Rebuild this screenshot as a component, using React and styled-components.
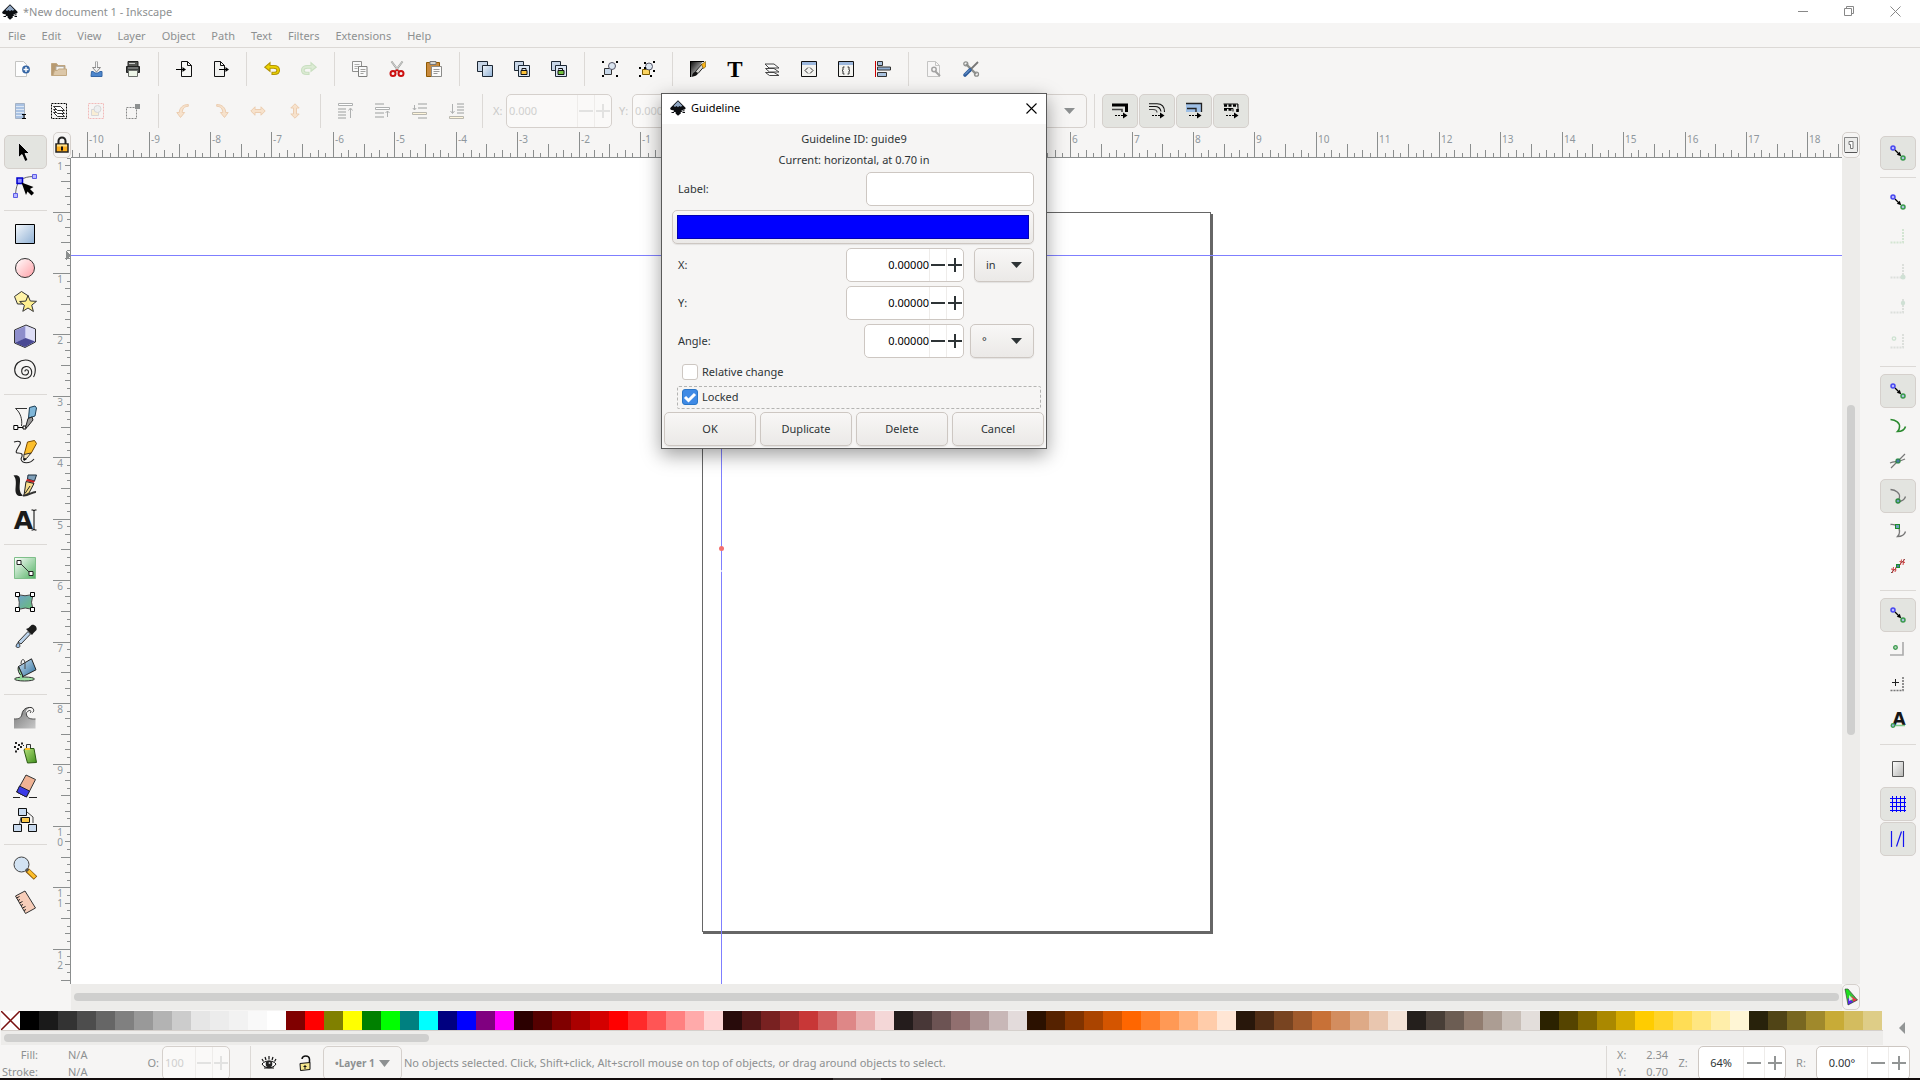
import React, { useLayoutEffect, useRef, useState } from 'react'
import styled, { createGlobalStyle, css } from 'styled-components'

const GlobalStyle = createGlobalStyle`
  * {
    box-sizing: border-box;
  }

  body {
    margin: 0;
    overflow: hidden;
    background: #f6f5f4;
    color: #8d9091;
    font-family: 'Noto Sans', 'Open Sans', sans-serif;
    font-size: 11px;
    line-height: 16px;
  }

  button,
  input,
  select {
    font: inherit;
    color: inherit;
    margin: 0;
    padding: 0;
  }

  svg {
    display: block;
    flex: none;
    overflow: visible;
  }
`

/* ---------- icons, 16px grid ---------- */

const smallIcons = {
  docNew: (
    <>
      <path d="M1.5.5h8l3 3v12h-11z" fill="#fdfdfd" stroke="#c4c4c2" />
      <circle cx="12" cy="8.5" r="3.9" fill="#3465a4" />
      <path d="M12 6v5M9.500 8.500h5" stroke="#fff" strokeWidth="1.400" />
    </>
  ),
  open: (
    <>
      <path d="M.5 14.500v-12h5l1.500 2h7v10z" fill="#b79a72" stroke="#c0a680" />
      <path d="M5 5.500h8v6H5z" fill="#f4f4f2" stroke="#b5ada2" />
      <path d="M2 14.500 3.500 9.500h3l1-1.500h8v6.500z" fill="#dcc7a8" stroke="#c3a981" />
    </>
  ),
  save: (
    <>
      <path d="M8.500.5v8" stroke="#a3a3a3" strokeWidth="3" />
      <path d="M4.500 6.500h8l-4 4.500z" fill="#f0f0f0" stroke="#8d8d8d" />
      <path d="M8.500 1v7" stroke="#f4f4f4" />
      <path d="M3.500 10.500h1.500l2 1.500h3l2-1.500h2v5h-11z" fill="#4d86cc" stroke="#3566a5" />
    </>
  ),
  print: (
    <>
      <path d="M3 .5h10v5H3z" fill="#555753" stroke="#222" />
      <path d="M4 2.500h6" stroke="#ccc" />
      <path d="M1.500 5.500h13v6h-13z" fill="#3d403f" stroke="#222" />
      <path d="M3 7h10" stroke="#aaa" />
      <path d="M3.500 9.500h9v6h-9z" fill="#eef6e8" stroke="#6b6e6a" />
    </>
  ),
  importDoc: (
    <>
      <path d="M5.500.5h6l4 4v11h-10z" fill="#f7f7f5" stroke="#111" />
      <path d="M11.500.5v4h4" fill="none" stroke="#111" />
      <path d="M0 8.500h8" stroke="#000" />
      <path d="M6.500 6 10 8.500l-3.500 2.500z" />
    </>
  ),
  exportDoc: (
    <>
      <path d="M1.500.5h6l4 4v11h-10z" fill="#f1f1ef" stroke="#111" />
      <path d="M7.500.5v4h4" fill="none" stroke="#111" />
      <path d="M6 8.500h8" stroke="#000" />
      <path d="M12.500 6 16 8.500l-3.500 2.500z" />
    </>
  ),
  undo: (
    <path
      d="M.8 6.200 6 1.800v2.700h3.500c3.500 0 6 1.700 6 4.700 0 2.700-2 4.300-5.500 4.300H8v-2.200h2c1.900 0 2.900-.8 2.900-2.100 0-1.300-1.300-1.900-3.300-1.900H6v3z"
      fill="#edd400"
      stroke="#b29406"
      strokeWidth="1.100"
    />
  ),
  redo: (
    <path
      d="M15.200 6.200 10 1.800v2.700H6.500c-3.500 0-6 1.700-6 4.700 0 2.700 2 4.300 5.500 4.300h2v-2.200H6c-1.900 0-2.900-.8-2.900-2.100 0-1.300 1.300-1.900 3.300-1.900H10v3z"
      fill="#dcebd4"
      stroke="#c9dfc0"
      strokeWidth="1.100"
    />
  ),
  copy: (
    <>
      <path d="M.5.5h9v10h-9z" fill="#fafafa" stroke="#8f8f8d" />
      <path d="M2.500 3.500h5M2.500 5.500h5M2.500 7.500h3" stroke="#b0b0ae" />
      <path d="M6.500 5.500h8.500v10H6.500z" fill="#fafafa" stroke="#7f7f7d" />
      <path d="M8.500 8.500h5M8.500 10.500h5M8.500 12.500h3" stroke="#a0a09e" />
    </>
  ),
  cut: (
    <>
      <path d="M2.500.5 10 10.500M13.500.5 6 10.500" stroke="#9a9c98" strokeWidth="2" />
      <path d="M2.800 1 10 10M13.200 1 6 10" stroke="#eee" strokeWidth=".7" />
      <circle cx="4" cy="12.500" r="2.500" fill="none" stroke="#cc1010" strokeWidth="2" />
      <circle cx="12" cy="12.500" r="2.500" fill="none" stroke="#cc1010" strokeWidth="2" />
      <path d="M6 10.500l2-1.500 2 1.500" fill="none" stroke="#cc1010" strokeWidth="1.500" />
    </>
  ),
  paste: (
    <>
      <path d="M.5 1.500h13v14H.5z" fill="#c98a3c" stroke="#8f5902" />
      <path d="M4 .5h6v3H4z" fill="#d5d5d2" stroke="#777" />
      <path d="M5.500 5.500h10v10h-10z" fill="#fbfbfb" stroke="#8b8b89" />
      <path d="M7.500 8.500h6M7.500 10.500h6M7.500 12.500h4" stroke="#999" />
    </>
  ),
  duplicate: (
    <>
      <path d="M.5.5h10v10H.5z" fill="#c7d5e6" stroke="#1c2733" />
      <path d="M5.500 4.500h10v11h-10z" fill="url(#blueFade)" stroke="#1c2733" />
    </>
  ),
  clone: (
    <>
      <path d="M.5.5h9v9h-9z" fill="#c7d5e6" stroke="#1c2733" />
      <path d="M4.500 4.500h11v11h-11z" fill="#dbe6f3" stroke="#1c2733" />
      <path d="M8 10V7.500h4V10" fill="none" stroke="#111" />
      <path d="M7 9.500h6v4H7z" fill="#fcc33a" stroke="#111" />
    </>
  ),
  unlink: (
    <>
      <path d="M.5.5h9v9h-9z" fill="#c7d5e6" stroke="#1c2733" />
      <path d="M4.500 4.500h11v11h-11z" fill="#dbe6f3" stroke="#1c2733" />
      <path d="M7.500 8.500V7.500h4V10" fill="none" stroke="#111" />
      <path d="M7 9.500h6v4H7z" fill="#73c140" stroke="#111" />
    </>
  ),
  group: (
    <>
      <path d="M2.500 7.500h7v6h-7z" fill="#c8d8ea" stroke="#333" />
      <circle cx="10" cy="5" r="3.500" fill="#dbe5f0" stroke="#556" />
      <path d="M0 0h2v2H0zM14 0h2v2h-2zM0 14h2v2H0zM14 14h2v2h-2z" />
    </>
  ),
  ungroup: (
    <>
      <path d="M3.500 8.500h7v5h-7z" fill="#fcd561" stroke="#7a5a00" />
      <circle cx="10" cy="5.500" r="3.500" fill="#dbe5f0" stroke="#556" />
      <path d="M5 1h2v2H5zM0 6h2v2H0zM14 0h2v2h-2zM0 14h2v2H0zM11 14h2v2h-2zM14 9h2v2h-2zM5 6h2v2H5z" />
    </>
  ),
  fillStroke: (
    <>
      <path d="M0 0h13L3 16H0z" fill="url(#inkFade)" />
      <path d="M.5 16V.5H14" fill="none" stroke="#000" />
      <path d="M2 15.500c0-3 2-4.500 4-5l2 2c-1 2-3 3-6 3z" fill="#111" />
      <path d="M5.500 10.500 12 3l2.500 2-6.500 7.500z" fill="#d5d5d2" stroke="#222" />
      <path d="M11.500 3.500 15.500.5V6l-2 1.500z" fill="#fcb315" stroke="#6b5200" strokeWidth=".6" />
    </>
  ),
  textT: (
    <text x="8" y="15.500" textAnchor="middle" fontFamily="'Liberation Serif', serif" fontWeight="700" fontSize="23" fill="#000">
      T
    </text>
  ),
  layers: (
    <g fill="#fafafa" stroke="#444">
      <path d="M1.500 11.500h8.500l5 3H5.500z" />
      <path d="M1.500 7.500h8.500l5 3.500H5.500z" />
      <path d="M1 3h9l5 4H5z" />
    </g>
  ),
  xml: (
    <>
      <path d="M.5.5h15v15H.5z" fill="#f3f3f0" stroke="#111" />
      <path d="M1 1h14v3H1z" fill="#9db8dd" />
      <path d="M7 6.500 4 9.500l3 3M9 6.500l3 3-3 3" fill="none" stroke="#333" />
    </>
  ),
  selectors: (
    <>
      <path d="M.5.5h15v15H.5z" fill="#f3f3f0" stroke="#111" />
      <path d="M1 1h14v3H1z" fill="#9db8dd" />
      <path d="M6.500 6h-1.500v3l-1 .5 1 .5v3h1.500M9.500 6H11v3l1 .5-1 .5v3H9.500" fill="none" stroke="#333" />
    </>
  ),
  align: (
    <>
      <path d="M.5 0v16" stroke="#c00" />
      <path d="M2.500.5h5v4h-5zM2.500 11.500h9v4h-9z" fill="#a9c2e0" stroke="#333" />
      <path d="M2.500 6h13v3h-13z" fill="#8fadd2" stroke="#333" />
    </>
  ),
  docProps: (
    <g opacity=".65">
      <path d="M1.500.5h8l4 4v11h-12z" fill="#f8f8f8" stroke="#aaa" />
      <path d="M9.500.5v4h4" fill="none" stroke="#aaa" />
      <circle cx="8" cy="8.500" r="2.200" fill="none" stroke="#777" strokeWidth="1.500" />
      <path d="M9 10l5 5" stroke="#777" strokeWidth="2" />
    </g>
  ),
  prefs: (
    <>
      <path d="M3 3l10 10" stroke="#8d8f8c" strokeWidth="2.400" />
      <circle cx="2.800" cy="2.800" r="2" fill="none" stroke="#8d8f8c" strokeWidth="1.300" />
      <circle cx="13.500" cy="13.200" r="2" fill="none" stroke="#8d8f8c" strokeWidth="1.300" />
      <path d="M8 8 15 1" stroke="#777" strokeWidth="1.800" />
      <path d="M2 14 7 9" stroke="#2d5c9c" strokeWidth="3.600" strokeLinecap="round" />
      <path d="M2 13.500 7 8.500" stroke="#83abdd" strokeWidth="1" />
    </>
  ),
  selectAll: (
    <>
      <path d="M1.500.5h9v15h-9z" fill="#a9c2e3" stroke="#a5b2c4" />
      <path d="M2 3.500h8M2 6.500h8M2 9.500h8M2 12.500h6" stroke="#dde7f4" />
      <path d="M8 11.500h4M8 15.500h4M10 12v3" stroke="#000" />
    </>
  ),
  selectLayers: (
    <>
      <path d="M.5.5h15v15H.5z" fill="none" stroke="#000" strokeDasharray="2 1" />
      <g fill="#fff" stroke="#333">
        <path d="M2.500 9.500h7l4 4h-7z" />
        <path d="M2.500 6.500h7l4 4h-7z" />
        <path d="M2.500 3.500h7l4 4h-7z" />
      </g>
    </>
  ),
  deselect: (
    <g opacity=".5">
      <path d="M.5.5h15v15H.5z" fill="none" stroke="#f08080" strokeDasharray="2 1" />
      <path d="M3.500 6.500h7v6h-7z" fill="#fce8b8" stroke="#bbb" />
      <circle cx="9.500" cy="6" r="3.500" fill="#e6eaee" stroke="#bbb" />
    </g>
  ),
  selectTouch: (
    <>
      <path d="M1.500 4.500h10v11h-10z" fill="none" stroke="#888" strokeDasharray="2 1" />
      <path d="M10 1h5v5h-5z" fill="#8d9090" />
    </>
  ),
  rotateLeft: (
    <path d="M4.500 14.500.8 9.500h2.500c0-4 3-8 9-8v1.800c-4 0-6 2.500-6 6.200h2.300z" fill="#f7e2cc" stroke="#eccdb0" />
  ),
  rotateRight: (
    <path d="M11.500 14.500l3.700-5h-2.500c0-4-3-8-9-8v1.800c4 0 6 2.500 6 6.200H7.400z" fill="#f7e2cc" stroke="#eccdb0" />
  ),
  flipH: <path d="M.8 8 5 3.800v2.700h6V3.800L15.200 8 11 12.200V9.500H5v2.700z" fill="#f7e2cc" stroke="#eccdb0" />,
  flipV: <path d="M8 .8 12.200 5H9.500v6h2.700L8 15.200 3.800 11h2.700V5H3.800z" fill="#f7e2cc" stroke="#eccdb0" />,
  raiseTop: (
    <>
      <path d="M.5.5h14v2H.5z" fill="#fff" stroke="#aeb0b0" />
      <path d="M0 6h8M0 9h8M0 12h8M0 15h8" stroke="#c9cac9" strokeWidth="2" />
      <path d="M12.500 6v9M10.500 7.500l2-2.500 2 2.500" fill="none" stroke="#aeb0b0" />
    </>
  ),
  raise: (
    <>
      <path d="M0 1h9M0 10h9M0 14h9" stroke="#c9cac9" strokeWidth="2" />
      <path d="M.5 4.500h14v2H.5z" fill="#fff" stroke="#aeb0b0" />
      <path d="M12.500 8v6M10.500 10l2-2 2 2" fill="none" stroke="#aeb0b0" />
    </>
  ),
  lower: (
    <>
      <path d="M6 1h9M6 5h9M6 15h9" stroke="#c9cac9" strokeWidth="2" />
      <path d="M.5 9.500h14v2H.5z" fill="#fff6dc" stroke="#b9b7ae" />
      <path d="M2.500 2v5M.8 5l1.700 2 1.700-2" fill="none" stroke="#aeb0b0" />
    </>
  ),
  lowerBottom: (
    <>
      <path d="M8 1h7M8 4h7M8 7h7M8 10h7" stroke="#c9cac9" strokeWidth="2" />
      <path d="M.5 13.500h14v2H.5z" fill="#fff6dc" stroke="#b9b7ae" />
      <path d="M3.500 1v9M1.500 8l2 2.500 2-2.500" fill="none" stroke="#aeb0b0" />
    </>
  ),
  scaleStroke: (
    <>
      <path d="M0 2h14.500V9" fill="none" stroke="#000" strokeWidth="3" />
      <path d="M0 6.500h10V9" fill="none" stroke="#444" strokeWidth="1.600" />
      <path d="M3 12.500h8" stroke="#000" strokeDasharray="2 1" />
      <path d="M11 9.500l4.500 3-4.500 3z" />
    </>
  ),
  scaleCorners: (
    <>
      <path d="M0 .8h8q7.500 0 7.500 8.200M0 3.500h6q5 0 6 5" fill="none" stroke="#111" strokeWidth="1.100" />
      <path d="M0 6.500h4q4 0 4 3" fill="none" stroke="#444" strokeWidth="1.100" />
      <path d="M3 12.500h8" stroke="#000" strokeDasharray="2 1" />
      <path d="M11 9.500l4.500 3-4.500 3z" />
    </>
  ),
  scaleGradient: (
    <>
      <path d="M0 1h15v8H0z" fill="#9fc0e6" />
      <path d="M0 .5h15.500V9M1 5.500h9V9" fill="none" stroke="#222" strokeWidth="1.300" />
      <path d="M3 12.500h8" stroke="#000" strokeDasharray="2 1" />
      <path d="M11 9.500l4.500 3-4.500 3z" />
    </>
  ),
  scalePattern: (
    <>
      <path d="M.5 1h14.500v7M1 5.500h9v3" fill="none" stroke="#111" />
      <path d="M1 2.500h14M1 6.500h9M14.500 6v3" stroke="#000" strokeWidth="2.600" strokeDasharray="3 1.500" />
      <path d="M3 12.500h8" stroke="#000" strokeDasharray="2 1" />
      <path d="M11 9.500l4.500 3-4.500 3z" />
    </>
  ),
  snap: (
    <>
      <circle cx="3" cy="3" r="2" fill="#b9b9ff" stroke="#4646f0" strokeWidth="1.500" />
      <circle cx="13" cy="13" r="2" fill="#a9bfe0" stroke="#3a9a4c" strokeWidth="1.500" />
      <path d="M5 5l4.500 4.500" stroke="#000" strokeWidth="1.200" />
      <path d="M11.200 11.200 6.800 9.800l3-3z" />
    </>
  ),
  snapBox: <path d="M13 0v13.500H0" fill="none" stroke="#d3e5d2" strokeWidth="2" strokeDasharray="2 1" />,
  snapCorner: (
    <>
      <path d="M13 0v13.500H0" fill="none" stroke="#dcdfdb" strokeWidth="2" strokeDasharray="2 1" />
      <circle cx="13" cy="13" r="2.500" fill="#cfe0d4" />
    </>
  ),
  snapMid: (
    <>
      <path d="M13 0v13.500H0" fill="none" stroke="#dcdfdb" strokeWidth="2" strokeDasharray="2 1" />
      <circle cx="13" cy="4" r="2.200" fill="#cfe0d4" />
    </>
  ),
  snapCenter: (
    <>
      <path d="M13 0v13.500H0" fill="none" stroke="#dcdfdb" strokeWidth="2" strokeDasharray="2 1" />
      <circle cx="4" cy="4.500" r="1.700" fill="none" stroke="#cde2d1" strokeWidth="1.300" />
    </>
  ),
  snapPath: (
    <path d="M.5 1.500C6 2 10 5 9.500 9c0 2-1 3.500-2 4.500 4 0 7-1.500 8-5" fill="none" stroke="#2b8a2f" strokeWidth="1.600" />
  ),
  snapCross: (
    <>
      <path d="M1 15 15 1M0 10c5-2 8-.5 15-4" fill="none" stroke="#777" strokeWidth="1.200" />
      <rect x="6" y="6" width="4" height="4" rx="1" fill="#4a78a8" stroke="#1d8a2b" />
    </>
  ),
  snapCusp: (
    <>
      <path d="M.5 1.500C6 2 10 5 9.500 9c0 2-1 3.500-2 4.500 4 0 7-1.500 8-5" fill="none" stroke="#777" strokeWidth="1.300" />
      <circle cx="8" cy="13" r="2" fill="#6f9fc0" stroke="#2b8a3b" strokeWidth="1.300" />
    </>
  ),
  snapSmooth: (
    <>
      <path d="M.5 1.500C6 1 10 4 9.500 9c0 2-1 3.500-2 4.500 4 0 7-1.500 8-5" fill="none" stroke="#777" strokeWidth="1.300" />
      <rect x="5.500" y="1.500" width="4" height="4" fill="#6f9fc0" stroke="#1d8a2b" />
    </>
  ),
  snapLine: (
    <>
      <path d="M1 15 15 1" stroke="#555" />
      <path d="M3.500 9 2.500 15M6 9l-1 5M1 11l5.500 1M11.500 1.500l-1 5.500M14 1l-1 6M9.500 3.500l5.500 1" stroke="#c44" />
      <rect x="6.500" y="6.500" width="3" height="3" fill="#4a78a8" stroke="#1d8a2b" />
    </>
  ),
  snapObject: (
    <>
      <path d="M13 0v13H0" fill="none" stroke="#aaa" strokeWidth="1.600" />
      <circle cx="5.500" cy="5.500" r="1.800" fill="#b9d6c0" stroke="#3a9a4c" strokeWidth="1.300" />
    </>
  ),
  snapRotation: (
    <>
      <path d="M13 0v13.500H0" fill="none" stroke="#777" strokeWidth="1.600" strokeDasharray="2 1" />
      <path d="M5.500 2v7M2 5.500h7" stroke="#222" />
    </>
  ),
  snapText: (
    <>
      <text x="9" y="13" textAnchor="middle" fontFamily="'DejaVu Sans', sans-serif" fontWeight="700" fontSize="17" fill="#161616">
        A
      </text>
      <path d="M3 13.500h12" stroke="#7fc98a" strokeWidth="1.500" />
      <circle cx="3" cy="13.500" r="1.800" fill="#8fb0d8" stroke="#3a9a4c" strokeWidth="1.300" />
    </>
  ),
  pageBorder: <path d="M2.500.5h11v15h-11z" fill="url(#greyFade)" stroke="#555" />,
  grid: <path d="M2.500 0v16M6.500 0v16M10.500 0v16M14.500 0v16M0 2.500h16M0 6.500h16M0 10.500h16M0 14.500h16" stroke="#00f" />,
  guides: <path d="M1.500 0v16M13.500 0v16M6.500 15.500 11.500.5" stroke="#1414f0" strokeWidth="1.200" />,
  eye: (
    <>
      <path d="M1 9c3-4 11-4 14 0-3 5-11 5-14 0z" fill="#fff" stroke="#111" />
      <circle cx="8" cy="9" r="3.300" fill="#222" />
      <circle cx="8.500" cy="8" r="1" fill="#ccc" />
      <path d="M2.500 6.500 1 4M5 5 4 2M8 4.500V1M11 5l1-3M13.500 6.500 15 4M3 13h10" stroke="#111" strokeWidth="1.200" />
    </>
  ),
  unlocked: (
    <>
      <path d="M5 4c.5-4 7-4 7.500 0v4" fill="none" stroke="#111" strokeWidth="1.500" />
      <path d="M3 8.500l10-1v7l-9.500 1z" fill="#f5e78e" stroke="#111" />
      <path d="M8 10v4M6.500 11.500h3" stroke="#111" />
    </>
  ),
}

/* ---------- toolbox icons, 24px grid ---------- */

const toolIcons = {
  selector: <path d="M5.500 2.500v15l3.500-3 3 7 3-1.300-3-6.700h4.500z" fill="#000" stroke="#fff" strokeWidth=".8" />,
  node: (
    <>
      <path d="M2.500 21C3 12 5 8 8 6q4-3.500 13-3.500" fill="none" stroke="#666" />
      <path d="M.5 19.500h4v4h-4zM19.500.5h4v4h-4z" fill="#b9b9ff" stroke="#5b5be6" />
      <path d="M4 4h5.500v5.500H4z" fill="#8f8fff" stroke="#00c" strokeWidth="1.500" />
      <path d="M8.500 8.500l12 4.500-3.500 2 4 4-2.500 2.500-4-4-1.500 3.500z" fill="#000" />
    </>
  ),
  rect: <path d="M2.500 2.500h19v19h-19z" fill="url(#blueFade)" stroke="#000" />,
  ellipse: <circle cx="12" cy="12" r="9.500" fill="url(#pinkFade)" stroke="#333" />,
  star: (
    <>
      <path d="M8.500 1.500l7 4.500-2.500 8H4.500L1.500 6.500z" fill="#fff3a8" stroke="#333" />
      <path d="M15 5.500l2.300 5.500 6.200.3-4.800 3.900 1.700 6.300-5.400-3.500-5.200 3.300 1.600-6L6.600 11.500l6.200-.4z" fill="#fff08f" stroke="#333" />
    </>
  ),
  box3d: (
    <>
      <path d="M13 1 22.500 5v13L12 23.500 1.500 19V6z" fill="#c5c5ee" stroke="#333" />
      <path d="M2 6.500 12 2.500v12l-10 4z" fill="#8e8ecb" />
      <path d="M13 2l9 3.500V17l-9-3z" fill="#dedef6" />
      <path d="M2 18.700 12.500 14l9.500 3.500-10 5.500z" fill="#4a4a94" />
    </>
  ),
  spiral: (
    <path
      d="M12 13.500c-.3-2.500 3.500-2.500 3.500.5 0 4-6.500 4.200-6.800-.5C8.400 8 16 6.500 18.300 12c1.700 5.500-2.500 8.500-6.300 8.500-6 0-10.300-3.500-10.300-8.500 0-6 4.800-10 10.800-10 7 0 11 6 9.500 13-.3 1.600-.8 2.800-1.500 4"
      fill="none"
      stroke="#222"
      strokeWidth="1.100"
    />
  ),
  pen: (
    <>
      <path d="M14 2.500H2.500c5 4 7 11 6 17.500" fill="none" stroke="#333" />
      <path d="M.8 19.500h4v4h-4z" fill="#fff" stroke="#000" />
      <path d="M5 21.500h5" stroke="#000" />
      <path d="M10 20h3v3h-3z" fill="#fff" stroke="#000" />
      <path d="M16.500 1.500 22 0l1.500 2-1.500 8-6.500 2z" fill="#7fb6d8" stroke="#1b3d55" />
      <path d="M15 12.500l4-1.500 1 3-6 7.500h-1.500z" fill="#999" stroke="#222" />
    </>
  ),
  pencil: (
    <>
      <path d="M1 2c6-2 8 0 5 4-3 5-4 7-1 7 5 0 5 2 3 6 1 5 9 5 13 0" fill="none" stroke="#222" strokeWidth="1.100" />
      <path d="M14.500 2l7-1.500 2 3-5.500 10-7 1.500z" fill="#fcbe2b" stroke="#7a4a00" />
      <path d="M11 14.500l7-1.500-4 5-3.500 2z" fill="#f8e7c0" stroke="#333" />
      <path d="M11 18v3l3-2z" fill="#111" />
    </>
  ),
  calligraphy: (
    <>
      <path d="M.5 1.500c5-1 7 1 6.500 6-.5 6-1 11 3 14-5 2-8-1-7.500-7 .5-5 1-10-2-13z" fill="#1c1c1c" />
      <path d="M10 21.500c5 1 9-4 13-3.500" fill="none" stroke="#333" strokeWidth="2" />
      <path d="M15 1h8.500l-2 6-7-2z" fill="#7f9fb8" stroke="#1b2d3d" />
      <path d="M14 5l8 2-1.500 2-7.500-2z" fill="#c22" />
      <path d="M13 7.500l8 2-5 9.500-5 2.500z" fill="#f7dd8c" stroke="#222" />
      <path d="M12 19.500 17 12" stroke="#222" />
    </>
  ),
  text: (
    <>
      <text x="10.500" y="21" textAnchor="middle" fontFamily="'DejaVu Sans', sans-serif" fontWeight="700" fontSize="25" fill="#1b1b1b">
        A
      </text>
      <path d="M18.500 2h2l.5 1 .5-1h2M21 3v18M18.500 22h2l.5-1 .5 1h2" fill="none" stroke="#000" />
    </>
  ),
  gradient: (
    <>
      <path d="M1.500 1.500h21v21h-21z" fill="url(#greenFade)" stroke="#7fbf8a" />
      <path d="M7 7l10 10" stroke="#333" />
      <path d="M4 4.500h4v4H4zM16 15.500h4v4h-4z" fill="#fff" stroke="#222" />
    </>
  ),
  mesh: (
    <>
      <path d="M4 4.500q8 2.500 16 0-3 8 0 15-8-3-15 0 3-7-1-15z" fill="url(#meshFade)" stroke="#444" />
      <path d="M2.500 2.500h4v4h-4zM17.500 2.500h4v4h-4zM2.500 17.500h4v4h-4zM17.500 17.500h4v4h-4z" fill="#fff" stroke="#000" />
    </>
  ),
  dropper: (
    <>
      <path d="M5 18 15 7.500l2.500 2.500L8 20z" fill="#bcd3ea" stroke="#333" />
      <path d="M13 5l6 6 1.500-2 3-3c1-3-2-6-5-5l-3 3z" fill="#1c1c1c" />
      <path d="M5 18.500c-3 4-2 5 0 5s3-1.500 0-5z" fill="#9cc3ea" stroke="#333" />
    </>
  ),
  bucket: (
    <>
      <ellipse cx="11.500" cy="21" rx="10" ry="2" fill="#9fe0a4" stroke="#333" />
      <path d="M5.500 8.500 18.500.8l4.500 11-13 6.700z" fill="url(#bucketFade)" stroke="#222" />
      <path d="M5.500 8.500 10 18.500c-3-.5-6-6-4.500-10z" fill="#8fd79a" stroke="#222" />
      <path d="M8 17v4" stroke="#8fd79a" strokeWidth="2" />
      <path d="M8 6c0-6 4-6 4 0v5" fill="none" stroke="#444" />
    </>
  ),
  tweak: (
    <>
      <path d="M1 22.500v-9c5 .5 7.500-1.500 8-5C9.500 4 13 1 18 1.500c-4 1-5.500 3-5 6 .5 4 4 6 9.500 6v9z" fill="url(#waveFade)" />
      <path d="M1 13c5 .5 7.500-1.500 8-5 .5-4 4-7 9-6.500 3 .5 3.500 4 1.500 5" fill="none" stroke="#333" />
      <path d="M17 7c1.500-1 1-3-.8-2.500-2.700 1-3.200 3-2.700 4.500.8 3 4 4.500 9 4" fill="none" stroke="#444" />
    </>
  ),
  spray: (
    <>
      <path d="M2 2h2v2H2zM5 4h2v2H5zM1 6h2v2H1zM4 8h2v2H4zM7 6h2v2H7zM8 2.500h2v2H8zM10 5h1v1h-1zM2 10.500h2v2H2z" fill="#222" />
      <path d="M13.500 4.500h4v4h-4z" fill="#eee" stroke="#333" />
      <path d="M12 8.500h9l2.500 14-9 .5-3.500-13z" fill="url(#sprayFade)" stroke="#2b5a12" />
      <path d="M12 9h5" stroke="#fcbe2b" strokeWidth="2" />
    </>
  ),
  eraser: (
    <>
      <path d="M13 1l9.500 4.500-9 17.500L3.500 18z" fill="#f0b394" stroke="#333" />
      <path d="M6.500 12 16.500 17l-3.200 6-9.500-5z" fill="#3b3be8" stroke="#223" />
      <path d="M0 23.500h7M16 23.500h8" stroke="#222" />
    </>
  ),
  connector: (
    <>
      <path d="M6.500 16 8 9M14 4l6 5v6" fill="none" stroke="#444" />
      <path d="M5.500.5h8v7h-8zM.5 16.500h8v7h-8zM15.500 16.500h8v7h-8z" fill="#c9daee" stroke="#111" />
      <path d="M8.500 9.500h8v5h-8z" fill="#fcc94a" stroke="#111" />
    </>
  ),
  zoom: (
    <>
      <circle cx="8.500" cy="8.500" r="7.500" fill="#d3e3f3" stroke="#444" />
      <path d="M14 14l8.500 8" stroke="#7a4a00" strokeWidth="5" />
      <path d="M15 14.500l7 7" stroke="#fcbe2b" strokeWidth="3.400" />
      <path d="M13 13l2 2" stroke="#555" strokeWidth="3" />
    </>
  ),
  measure: (
    <>
      <path d="M12 1 22.500 18 12.500 23.500 2.500 6z" fill="#f7cdb9" stroke="#333" />
      <path d="M3.500 8l3-1.500M5 10.500l2-1M6.500 13l3-1.500M8 15.500l2-1M9.500 18l3-1.500M11 20.500l2-1" stroke="#222" />
    </>
  ),
}

function Icon({ name, size = 16 }) {
  const set = size === 24 ? toolIcons : smallIcons
  return (
    <svg width={size} height={size} viewBox={`0 0 ${size} ${size}`} fill="#000" aria-hidden="true">
      {set[name]}
    </svg>
  )
}

function AppLogo({ size }) {
  return (
    <svg width={size} height={size} viewBox="0 0 16 16" aria-hidden="true">
      <path d="M8 .3 15.300 7.500c1 1.200-.3 2-2 2.300l-2 .7 1.200 1-2 .8.500 1L8 15.700l-2.500-2.200.5-1-2.500-.8.500-1.200L1.500 10C.2 9.500-.3 8.500.7 7.500z" fill="#0b0d10" />
      <path d="M8 1.300 12.500 6l-2 .8-1.200-.8L8 7.200 6.500 6 5 7 3.500 6z" fill="#8fa6c2" />
      <path d="M1.500 12.500h2.500M12.500 12.500h2.500M12.500 10.800h2" stroke="#0b0d10" />
    </svg>
  )
}

function Gradients() {
  const stops = [
    ['blueFade', '#f4f8fc', '#8fb0d4'],
    ['pinkFade', '#ffffff', '#ff9fa6'],
    ['greenFade', '#ffffff', '#52b263'],
    ['meshFade', '#6f9fd0', '#67bf73'],
    ['bucketFade', '#cfe3f5', '#2d6f9c'],
    ['waveFade', '#777777', '#c9c9c9'],
    ['sprayFade', '#b7e27c', '#3f8f1c'],
    ['greyFade', '#ffffff', '#b5b5b3'],
    ['inkFade', '#000000', '#ffffff'],
  ]
  return (
    <HiddenSvg aria-hidden="true">
      <defs>
        {stops.map(([id, from, to]) => (
          <linearGradient key={id} id={id} x1="0" y1="0" x2="1" y2="1">
            <stop offset="0" stopColor={from} />
            <stop offset="1" stopColor={to} />
          </linearGradient>
        ))}
      </defs>
    </HiddenSvg>
  )
}

/* ---------- data ---------- */

const menus = ['File', 'Edit', 'View', 'Layer', 'Object', 'Path', 'Text', 'Filters', 'Extensions', 'Help']

const commands = [
  ['docNew', 'open', 'save', 'print'],
  ['importDoc', 'exportDoc'],
  ['undo', 'redo'],
  ['copy', 'cut', 'paste'],
  ['duplicate', 'clone', 'unlink'],
  ['group', 'ungroup'],
  ['fillStroke', 'textT', 'layers', 'xml', 'selectors', 'align'],
  ['docProps', 'prefs'],
]

const selectorCommands = [
  ['selectAll', 'selectLayers', 'deselect', 'selectTouch'],
  ['rotateLeft', 'rotateRight', 'flipH', 'flipV'],
  ['raiseTop', 'raise', 'lower', 'lowerBottom'],
]

const scaleToggles = ['scaleStroke', 'scaleCorners', 'scaleGradient', 'scalePattern']

const tools = [
  ['selector', 'node'],
  ['rect', 'ellipse', 'star', 'box3d', 'spiral'],
  ['pen', 'pencil', 'calligraphy', 'text'],
  ['gradient', 'mesh', 'dropper', 'bucket'],
  ['tweak', 'spray', 'eraser', 'connector'],
  ['zoom', 'measure'],
]

const snaps = [
  [['snap', true]],
  [['snap'], ['snapBox'], ['snapCorner'], ['snapMid'], ['snapCenter']],
  [['snap', true], ['snapPath'], ['snapCross'], ['snapCusp', true], ['snapSmooth'], ['snapLine']],
  [['snap', true], ['snapObject'], ['snapRotation'], ['snapText']],
  [['pageBorder'], ['grid', true], ['guides', true]],
]

const swatches = `
000000 1a1a1a 333333 4d4d4d 666666 808080 999999 b3b3b3 cccccc e6e6e6 ececec f2f2f2 f9f9f9 ffffff
800000 ff0000 808000 ffff00 008000 00ff00 008080 00ffff 000080 0000ff 800080 ff00ff
2b0000 550000 800000 aa0000 d40000 ff0000 ff2a2a ff5555 ff8080 ffaaaa ffd5d5
280b0b 501616 782121 a02c2c c83737 d35f5f de8787 e9afaf f4d7d7
241c1c 483737 6c5353 916f6f ac9393 c8b7b7 e3dbdb
2b1100 552200 803300 aa4400 d45500 ff6600 ff7f2a ff9955 ffb380 ffccaa ffe6d5
28170b 502d16 784421 a05a2c c87137 d38d5f deaa87 e9c6af f4e3d7
241f1c 483e37 6c5d53 917c6f ac9d93 c8beb7 e3dedb
2b2200 554400 806600 aa8800 d4aa00 ffcc00 ffd42a ffdd55 ffe680 ffeeaa fff6d5
28220b 504416 786721 a0892c c8ab37 d3bc5f decd87
`
  .trim()
  .split(/\s+/)

/* ---------- rulers and canvas ---------- */

const INCH = 61.44
const ORIGIN_X = 631
const ORIGIN_Y = 54

function useSize() {
  const ref = useRef(null)
  const [size, setSize] = useState({ width: 0, height: 0 })
  useLayoutEffect(() => {
    const measure = () => {
      const box = ref.current.getBoundingClientRect()
      setSize({ width: box.width, height: box.height })
    }
    measure()
    window.addEventListener('resize', measure)
    return () => window.removeEventListener('resize', measure)
  }, [])
  return [ref, size]
}

// eighth-inch ticks that fall between 0 and length
const ticksFor = (origin, length) => {
  const list = []
  for (let i = Math.ceil((-origin * 8) / INCH); ; i++) {
    const at = Math.floor(origin + (i * INCH) / 8)
    if (at >= length) break
    list.push({ i, at })
  }
  return list
}

const tickLength = (i, lengths) => {
  if (i % 8 === 0) return lengths[0]
  if (i % 4 === 0) return lengths[1]
  if (i % 2 === 0) return lengths[2]
  return lengths[3]
}

function TopRuler() {
  const [ref, { width }] = useSize()
  const list = ticksFor(ORIGIN_X, width)
  return (
    <RulerSvg ref={ref} width="100%" height="26">
      {list.map(({ i, at }) => {
        const len = tickLength(i, [26, 14, 8, 5])
        return <rect key={i} x={at} y={26 - len} width="1" height={len} />
      })}
      {list
        .filter(({ i }) => i % 8 === 0)
        .map(({ i, at }) => (
          <text key={i} x={at + 2} y="11">
            {i / 8}
          </text>
        ))}
      <rect x="0" y="25" width="100%" height="1" />
    </RulerSvg>
  )
}

function LeftRuler() {
  const [ref, { height }] = useSize()
  const list = ticksFor(ORIGIN_Y, height)
  return (
    <RulerSvg ref={ref} width="18" height="100%">
      {list.map(({ i, at }) => {
        const len = tickLength(i, [18, 10, 6, 4])
        return <rect key={i} x={18 - len} y={at} width={len} height="1" />
      })}
      <text x="7" y="12" textAnchor="middle">
        1
      </text>
      {list
        .filter(({ i }) => i % 8 === 0)
        .map(({ i, at }) =>
          String(i / 8)
            .split('')
            .map((ch, n) => (
              <text key={`${i}-${n}`} x="7" y={at + 10 + n * 10} textAnchor="middle">
                {ch}
              </text>
            )),
        )}
      <rect x="17" y="0" width="1" height="100%" />
      <path d="M13 93l5 4.500-5 4.500z" />
    </RulerSvg>
  )
}

function Canvas() {
  return (
    <CanvasSvg width="100%" height="100%">
      <rect x="1139" y="56" width="3" height="720" fill="#666" />
      <rect x="632" y="773" width="510" height="3" fill="#666" />
      <rect x="631.500" y="54.500" width="508" height="719" fill="#fff" stroke="#666" />
      <rect x="0" y="97" width="100%" height="1" fill="#7f7fff" />
      <rect x="650" y="0" width="1" height="100%" fill="#7f7fff" />
      <rect x="650" y="412" width="1" height="2" fill="#d9d9ff" />
      <circle cx="650.500" cy="390.500" r="2.500" fill="#f37070" />
    </CanvasSvg>
  )
}

/* ---------- controls ---------- */

function Spin({ label, value, width, alignRight, muted, faint }) {
  return (
    <SpinBox $width={width} $faint={faint}>
      <SpinInput aria-label={label} defaultValue={value} $right={alignRight} $faint={faint} $muted={muted} />
      <SpinButton aria-label={`Decrease ${label}`} $faint={faint} $muted={muted}>
        <svg width="14" height="14" viewBox="0 0 14 14">
          <path d="M0 7h14" stroke="currentColor" strokeWidth="2" />
        </svg>
      </SpinButton>
      <SpinButton aria-label={`Increase ${label}`} $faint={faint} $muted={muted}>
        <svg width="14" height="14" viewBox="0 0 14 14">
          <path d="M0 7h14M7 0v14" stroke="currentColor" strokeWidth="2" />
        </svg>
      </SpinButton>
    </SpinBox>
  )
}

function Combo({ label, value, width, flat }) {
  return (
    <ComboBox $width={width} $flat={flat}>
      <select aria-label={label} defaultValue={value}>
        <option>{value}</option>
      </select>
      <svg width="11" height="6" viewBox="0 0 11 6" aria-hidden="true">
        <path d="M0 0h11L5.500 6z" fill="currentColor" />
      </svg>
    </ComboBox>
  )
}

function Check({ label, checked, focused }) {
  return (
    <CheckRow $focused={focused}>
      <CheckMark>
        <input type="checkbox" defaultChecked={checked} />
        {checked && (
          <svg width="14" height="14" viewBox="0 0 14 14" aria-hidden="true">
            <path d="M2 7l3.500 3.500L12 4" fill="none" stroke="#fff" strokeWidth="3" />
          </svg>
        )}
      </CheckMark>
      {label}
    </CheckRow>
  )
}

function ButtonGroups({ groups }) {
  return groups.map((group, n) => (
    <React.Fragment key={n}>
      {n > 0 && <Divider />}
      {group.map((name) => (
        <ToolButton key={name} aria-label={name}>
          <Icon name={name} />
        </ToolButton>
      ))}
    </React.Fragment>
  ))
}

function GuidelineDialog() {
  return (
    <Dialog role="dialog" aria-label="Guideline">
      <DialogTitle>
        <AppLogo size={16} />
        <span>Guideline</span>
        <CloseButton aria-label="Close">
          <svg width="11" height="11" viewBox="0 0 11 11">
            <path d="M.5.5l10 10M10.500.5l-10 10" stroke="#000" strokeWidth="1.100" />
          </svg>
        </CloseButton>
      </DialogTitle>
      <DialogInfo>
        <div>Guideline ID: guide9</div>
        <div>Current: horizontal, at 0.70 in</div>
      </DialogInfo>
      <Form>
        <FormRow>
          <FormLabel htmlFor="guide-label">Label:</FormLabel>
          <TextInput id="guide-label" type="text" />
        </FormRow>
        <ColorButton aria-label="Guideline colour">
          <span />
        </ColorButton>
        <FormRow $gap={10}>
          <FormLabel as="span">X:</FormLabel>
          <Spin label="X" value="0.00000" width={118} alignRight />
          <Combo label="Unit" value="in" width={60} />
        </FormRow>
        <FormRow $gap={10}>
          <FormLabel as="span">Y:</FormLabel>
          <Spin label="Y" value="0.00000" width={118} alignRight />
          <ComboSpace />
        </FormRow>
        <FormRow $gap={6}>
          <FormLabel as="span">Angle:</FormLabel>
          <Spin label="Angle" value="0.00000" width={100} alignRight />
          <Combo label="Angle unit" value="°" width={64} />
        </FormRow>
      </Form>
      <Checks>
        <Check label="Relative change" />
        <Check label="Locked" checked focused />
      </Checks>
      <Actions>
        {['OK', 'Duplicate', 'Delete', 'Cancel'].map((name) => (
          <ActionButton key={name}>{name}</ActionButton>
        ))}
      </Actions>
    </Dialog>
  )
}

function App() {
  return (
    <Window>
      <GlobalStyle />
      <Gradients />
      <TitleBar>
        <AppLogo size={16} />
        <span>*New document 1 - Inkscape</span>
        <WindowButtons>
          <button aria-label="Minimize">
            <svg width="11" height="11" viewBox="0 0 11 11">
              <path d="M0 5.500h10" stroke="#888" />
            </svg>
          </button>
          <button aria-label="Restore">
            <svg width="11" height="11" viewBox="0 0 11 11">
              <path d="M.5 2.500h7v7h-7zM2.500 2.500v-2h7v7h-2" fill="none" stroke="#888" />
            </svg>
          </button>
          <button aria-label="Close window">
            <svg width="11" height="11" viewBox="0 0 11 11">
              <path d="M.5.5l10 10M10.500.5l-10 10" stroke="#888" />
            </svg>
          </button>
        </WindowButtons>
      </TitleBar>

      <MenuBar>
        {menus.map((name) => (
          <button key={name}>{name}</button>
        ))}
      </MenuBar>

      <Toolbar>
        <ButtonGroups groups={commands} />
      </Toolbar>

      <Toolbar>
        <ButtonGroups groups={selectorCommands} />
        <Divider />
        <Fields>
          <span>X:</span>
          <Spin label="X position" value="0.000" width={106} faint />
          <span>Y:</span>
          <Spin label="Y position" value="0.000" width={106} faint />
          <span>W:</span>
          <Spin label="Width" value="0.000" width={106} faint />
          <span>H:</span>
          <Spin label="Height" value="0.000" width={106} faint />
        </Fields>
        <Combo label="Toolbar unit" value="in" width={62} flat />
        <Divider />
        {scaleToggles.map((name) => (
          <ToolButton key={name} aria-label={name} $on>
            <Icon name={name} />
          </ToolButton>
        ))}
      </Toolbar>

      <Workspace>
        <Toolbox>
          {tools.map((group, n) => (
            <React.Fragment key={n}>
              {n > 0 && <Rule />}
              {group.map((name) => (
                <ToolboxButton key={name} aria-label={name} $on={name === 'selector'}>
                  <Icon name={name} size={24} />
                </ToolboxButton>
              ))}
            </React.Fragment>
          ))}
        </Toolbox>

        <Desk>
          <CornerButton aria-label="Lock guides">
            <svg width="14" height="18" viewBox="0 0 14 18">
              <path d="M3.500 8V5a3.500 3.500 0 0 1 7 0v3" fill="none" stroke="#222" strokeWidth="2" />
              <path d="M1 8h12v8H1z" fill="#fcae1e" stroke="#222" strokeWidth="1.500" />
              <path d="M2 9.500h10" stroke="#ffe08a" strokeWidth="2" />
              <path d="M7 10.500v4" stroke="#111" strokeWidth="2" />
            </svg>
          </CornerButton>
          <TopRuler />
          <CornerButton aria-label="Zoom drawing">
            <svg width="16" height="18" viewBox="0 0 16 18">
              <path d="M1.500 1.500h13v14q0 1-1 1h-11q-1 0-1-1z" fill="#ececeb" stroke="#888" />
              <path d="M2 16.500h12" stroke="#555" />
              <path d="M6 5.500h4v7H7.500v-4H6z" fill="#fff" stroke="#777" />
            </svg>
          </CornerButton>
          <LeftRuler />
          <Canvas />
          <VerticalScroll>
            <span />
          </VerticalScroll>
          <div />
          <HorizontalScroll>
            <span />
          </HorizontalScroll>
          <CornerButton aria-label="Colour management">
            <svg width="14" height="18" viewBox="0 0 14 18">
              <path d="M1 1l3 0L13.500 12 4 17z" fill="#3ac23a" />
              <path d="M1 1h3l3 7-3 2z" fill="#1ee01e" />
              <path d="M7 8l6.500 4-4 2z" fill="#f03050" />
              <path d="M4 10l5.500 4L4 17z" fill="#5a2ae8" />
              <path d="M5 7l4 4-4 2z" fill="#fff" opacity=".75" />
              <path d="M1 1h3l9.500 11L4 17z" fill="none" stroke="#333" strokeWidth=".6" />
            </svg>
          </CornerButton>
        </Desk>

        <SnapBar>
          {snaps.map((group, n) => (
            <React.Fragment key={n}>
              {n > 0 && <SnapRule />}
              {group.map(([name, on]) => (
                <SnapButton key={name} aria-label={name} $on={on}>
                  <Icon name={name} />
                </SnapButton>
              ))}
            </React.Fragment>
          ))}
        </SnapBar>
      </Workspace>

      <PaletteBar>
        <PaletteScroller>
          <Swatches>
            <Swatch aria-label="None" $color="#fff">
              <svg width="19" height="19" viewBox="0 0 19 19">
                <path d="M0 0l19 19M19 0 0 19" stroke="#7a1010" strokeWidth="1.500" />
              </svg>
            </Swatch>
            {swatches.map((c, n) => (
              <Swatch key={n} aria-label={`#${c}`} $color={`#${c}`} />
            ))}
          </Swatches>
          <PaletteTrough>
            <span />
          </PaletteTrough>
        </PaletteScroller>
        <PaletteMenu aria-label="Palette menu">
          <svg width="6" height="12" viewBox="0 0 6 12">
            <path d="M6 0v12L0 6z" fill="#929595" />
          </svg>
        </PaletteMenu>
      </PaletteBar>

      <StatusBar>
        <StyleGrid>
          <span>Fill:</span>
          <b>N/A</b>
          <span>Stroke:</span>
          <b>N/A</b>
        </StyleGrid>
        <OpacityLabel>O:</OpacityLabel>
        <Spin label="Opacity" value="100" width={68} faint />
        <StatusDivider $left={20} />
        <StatusIcon aria-label="Toggle layer visibility">
          <Icon name="eye" />
        </StatusIcon>
        <StatusIcon aria-label="Toggle layer lock">
          <Icon name="unlocked" />
        </StatusIcon>
        <LayerButton>
          •Layer 1
          <svg width="11" height="7" viewBox="0 0 11 7" aria-hidden="true">
            <path d="M0 0h11L5.500 7z" fill="currentColor" />
          </svg>
        </LayerButton>
        <StatusText>
          No objects selected. Click, Shift+click, Alt+scroll mouse on top of objects, or drag around objects to select.
        </StatusText>
        <StatusDivider $left={0} />
        <Coords>
          <span>X:</span>
          <b>2.34</b>
          <span>Y:</span>
          <b>0.70</b>
        </Coords>
        <StatusLabel>Z:</StatusLabel>
        <Spin label="Zoom" value="64%" width={88} muted />
        <StatusLabel>R:</StatusLabel>
        <Spin label="Rotation" value="0.00°" width={94} muted />
      </StatusBar>
      <Taskbar>
        <span />
      </Taskbar>

      <GuidelineDialog />
    </Window>
  )
}

/* ---------- frame ---------- */

const Window = styled.div`
  position: relative;
  display: flex;
  flex-direction: column;
  height: 100vh;
`

const HiddenSvg = styled.svg`
  position: absolute;
  width: 0;
  height: 0;
`

const TitleBar = styled.header`
  display: flex;
  align-items: center;
  gap: 5px;
  height: 23px;
  padding-left: 2px;
  background: #fff;
`

const WindowButtons = styled.div`
  display: flex;
  margin-left: auto;
  padding-right: 2px;

  button {
    display: flex;
    align-items: center;
    justify-content: center;
    width: 46px;
    height: 21px;
    border: 0;
    background: none;
  }
`

const MenuBar = styled.nav`
  display: flex;
  height: 25px;
  padding-top: 1px;
  border-bottom: 1px solid #dcd9d6;

  button {
    padding: 0 8px;
    border: 0;
    background: none;
  }
`

const Toolbar = styled.div`
  display: flex;
  align-items: center;
  gap: 1px;
  height: 42px;
  padding: 4px;
`

const pressed = css`
  border-color: #d5d0cc;
  background: #e3e4e0;
`

const ToolButton = styled.button`
  display: flex;
  align-items: center;
  justify-content: center;
  width: 36px;
  height: 34px;
  border: 1px solid transparent;
  border-radius: 5px;
  background: none;
  ${(p) => p.$on && pressed}
`

const Divider = styled.span`
  width: 1px;
  height: 34px;
  margin: 0 6px;
  background: #dcd9d6;
`

const Fields = styled.div`
  display: flex;
  align-items: center;
  width: 534px;
  padding-left: 3px;
  color: #c9c9c8;

  span {
    width: 13px;
  }

  > div {
    margin-right: 7px;
  }
`

/* ---------- inputs ---------- */

const SpinBox = styled.div`
  display: flex;
  flex: none;
  width: ${(p) => p.$width}px;
  height: 34px;
  border: 1px solid ${(p) => (p.$faint ? '#d5d0cc' : '#cdc7c2')};
  border-radius: 5px;
  background: ${(p) => (p.$faint ? '#faf9f8' : '#fff')};
  overflow: hidden;
`

const SpinInput = styled.input`
  flex: 1;
  min-width: 0;
  padding-left: ${(p) => (p.$faint ? 2 : 0)}px;
  border: 0;
  outline: 0;
  background: none;
  text-align: ${(p) => (p.$right ? 'right' : p.$muted ? 'center' : 'left')};
  color: ${(p) => (p.$faint ? '#d0d0cf' : p.$muted ? '#2e3436' : '#000')};
`

const SpinButton = styled.button`
  display: flex;
  align-items: center;
  justify-content: center;
  width: ${(p) => (p.$muted ? 21 : 17)}px;
  border: 0;
  border-left: 1px solid #eeecea;
  background: none;
  color: ${(p) => (p.$faint ? '#e2e2e1' : p.$muted ? '#929595' : '#2e3436')};
`

const ComboBox = styled.div`
  display: flex;
  align-items: center;
  flex: none;
  width: ${(p) => p.$width}px;
  height: 34px;
  padding-right: 11px;
  border: 1px solid #cdc7c2;
  border-radius: 5px;
  background: linear-gradient(#f8f7f6, #ebe9e7);
  box-shadow: 0 1px 1px rgba(0, 0, 0, 0.08);
  ${(p) =>
    p.$flat &&
    css`
      border-color: #d5d0cc;
      background: none;
      box-shadow: none;
    `}

  select {
    flex: 1;
    min-width: 0;
    height: 100%;
    padding-left: 11px;
    border: 0;
    outline: 0;
    background: none;
    appearance: none;
  }
`

const ComboSpace = styled.span`
  width: 60px;
`

/* ---------- workspace ---------- */

const Workspace = styled.main`
  display: flex;
  flex: 1;
  min-height: 0;
`

const Toolbox = styled.div`
  display: flex;
  flex-direction: column;
  flex: none;
  width: 53px;
  padding: 3px 7px 0 4px;
`

const ToolboxButton = styled(ToolButton)`
  width: 43px;
  padding-right: 1px;
`

const Rule = styled.span`
  height: 1px;
  margin: 7px 0 6px;
  width: 43px;
  background: #dcd9d6;
`

const Desk = styled.div`
  display: grid;
  flex: 1;
  min-width: 0;
  grid-template-columns: 18px minmax(0, 1fr) 18px;
  grid-template-rows: 26px minmax(0, 1fr) 26px;
`

const RulerSvg = styled.svg`
  fill: #8b8e8e;
  shape-rendering: crispEdges;

  text {
    font-size: 10px;
    fill: #8f979d;
  }
`

const CanvasSvg = styled.svg`
  background: #fff;
  overflow: hidden;
`

const CornerButton = styled.button`
  display: flex;
  align-items: center;
  justify-content: center;
  border: 1px solid #d5d0cc;
  border-radius: 5px;
  background: #f6f5f4;
`

const Scroll = styled.div`
  display: flex;
  background: #edecea;

  span {
    border-radius: 4px;
    background: #cfcfce;
  }
`

const VerticalScroll = styled(Scroll)`
  justify-content: center;

  span {
    width: 8px;
    height: 40%;
    margin-top: 247px;
  }
`

const HorizontalScroll = styled(Scroll)`
  align-items: center;
  padding: 0 3px;

  span {
    flex: 1;
    height: 8px;
  }
`

const SnapBar = styled.div`
  display: flex;
  flex-direction: column;
  align-items: center;
  flex: none;
  gap: 1px;
  width: 60px;
  padding: 4px 4px 0 20px;
`

const SnapButton = styled(ToolButton)`
  flex: none;
`

const SnapRule = styled.span`
  width: 36px;
  height: 1px;
  margin: 6px 0;
  background: #dcd9d6;
`

/* ---------- palette and status ---------- */

const PaletteBar = styled.div`
  display: flex;
  align-items: stretch;
  height: 35px;
  padding: 1px 0 0 1px;
`

const PaletteScroller = styled.div`
  flex: 1;
  min-width: 0;
`

const Swatches = styled.div`
  display: flex;
  height: 20px;
  border-bottom: 1px solid #d5d0cc;
  overflow: hidden;
`

const Swatch = styled.button`
  flex: none;
  width: 19px;
  height: 19px;
  border: 0;
  background: ${(p) => p.$color};
  overflow: hidden;
`

const PaletteTrough = styled(Scroll)`
  align-items: center;
  height: 14px;
  padding: 0 3px;

  span {
    width: 425px;
    height: 8px;
  }
`

const PaletteMenu = styled.button`
  display: flex;
  align-items: center;
  justify-content: center;
  width: 37px;
  border: 0;
  background: none;
`

const StatusBar = styled.footer`
  display: flex;
  align-items: flex-start;
  height: 33px;
  padding: 1px 10px 0 0;
  overflow: hidden;
`

const StyleGrid = styled.div`
  display: grid;
  grid-template-columns: 38px 40px;
  column-gap: 30px;
  line-height: 17px;

  span {
    text-align: right;
  }

  b {
    font-weight: 400;
  }
`

const StatusLabel = styled.span`
  width: 30px;
  line-height: 34px;
  text-align: center;
`

const OpacityLabel = styled(StatusLabel)`
  width: 54px;
  padding-right: 3px;
  text-align: right;
`

const StatusDivider = styled.span`
  width: 1px;
  height: 33px;
  margin-left: ${(p) => p.$left}px;
  background: #dcd9d6;
`

const StatusIcon = styled.button`
  display: flex;
  align-items: center;
  justify-content: center;
  width: 36px;
  height: 34px;
  border: 0;
  background: none;
`

const LayerButton = styled.button`
  display: flex;
  align-items: center;
  gap: 4px;
  height: 34px;
  width: 79px;
  padding-left: 11px;
  border: 1px solid #d5d0cc;
  border-radius: 5px;
  background: none;
  font-size: 10px;
  font-weight: 700;
  white-space: nowrap;
`

const StatusText = styled.span`
  flex: 1;
  min-width: 0;
  padding-left: 2px;
  line-height: 34px;
  white-space: nowrap;
  overflow: hidden;
`

const Coords = styled.div`
  display: grid;
  grid-template-columns: 20px 31px;
  padding-left: 10px;
  line-height: 17px;

  b {
    font-weight: 400;
    text-align: right;
  }
`

const Taskbar = styled.div`
  display: flex;
  justify-content: center;
  height: 2px;
  background: #120c0c;

  span {
    width: 48px;
    margin-right: 206px;
    background: #3a3636;
  }
`

/* ---------- dialog ---------- */

const Dialog = styled.section`
  position: absolute;
  left: 661px;
  top: 93px;
  width: 386px;
  border: 1px solid #5a5a5a;
  background: #f6f5f4;
  color: #2e3436;
  box-shadow: 0 6px 18px rgba(0, 0, 0, 0.38);
`

const DialogTitle = styled.header`
  display: flex;
  align-items: center;
  gap: 5px;
  height: 30px;
  padding: 0 0 2px 8px;
  background: #fff;
  color: #000;
`

const CloseButton = styled.button`
  display: flex;
  align-items: center;
  justify-content: center;
  width: 30px;
  height: 28px;
  margin-left: auto;
  border: 0;
  background: none;
`

const DialogInfo = styled.div`
  padding: 4px 0 1px;
  line-height: 21px;
  text-align: center;
`

const Form = styled.div`
  display: flex;
  flex-direction: column;
  gap: 4px;
  padding: 1px 12px 0 10px;
`

const FormRow = styled.div`
  display: flex;
  align-items: center;
  gap: ${(p) => p.$gap || 0}px;
`

const FormLabel = styled.label`
  margin-right: auto;
  padding-left: 6px;
`

const TextInput = styled.input`
  width: 168px;
  height: 34px;
  padding: 0 8px;
  border: 1px solid #cdc7c2;
  border-radius: 5px;
  outline: 0;
  background: #fff;
`

const ColorButton = styled.button`
  height: 34px;
  padding: 4px;
  border: 1px solid #cdc7c2;
  border-radius: 5px;
  background: linear-gradient(#f8f7f6, #ebe9e7);
  box-shadow: 0 1px 1px rgba(0, 0, 0, 0.08);

  span {
    display: block;
    height: 24px;
    border: 1px solid #0000b4;
    background: #00f;
  }
`

const Checks = styled.div`
  display: flex;
  flex-direction: column;
  gap: 2px;
  padding: 3px 5px 0 15px;
`

const CheckRow = styled.label`
  display: flex;
  align-items: flex-start;
  gap: 4px;
  height: 23px;
  padding: 2px 0 0 4px;
  border: 1px dashed ${(p) => (p.$focused ? '#b4b4b2' : 'transparent')};
  border-radius: 2px;
`

const CheckMark = styled.span`
  position: relative;
  display: flex;

  input {
    width: 16px;
    height: 16px;
    border: 1px solid #cdc7c2;
    border-radius: 3px;
    background: #fff;
    appearance: none;
  }

  input:checked {
    border-color: #2a76c6;
    background: #3f8ae5;
  }

  svg {
    position: absolute;
    left: 1px;
    top: 1px;
    pointer-events: none;
  }
`

const Actions = styled.div`
  display: grid;
  grid-template-columns: repeat(4, 1fr);
  gap: 4px;
  padding: 3px 2px 2px;
`

const ActionButton = styled.button`
  height: 34px;
  border: 1px solid #cdc7c2;
  border-radius: 5px;
  background: linear-gradient(#f8f7f6, #ebe9e7);
  box-shadow: 0 1px 1px rgba(0, 0, 0, 0.08);
`

export default App
